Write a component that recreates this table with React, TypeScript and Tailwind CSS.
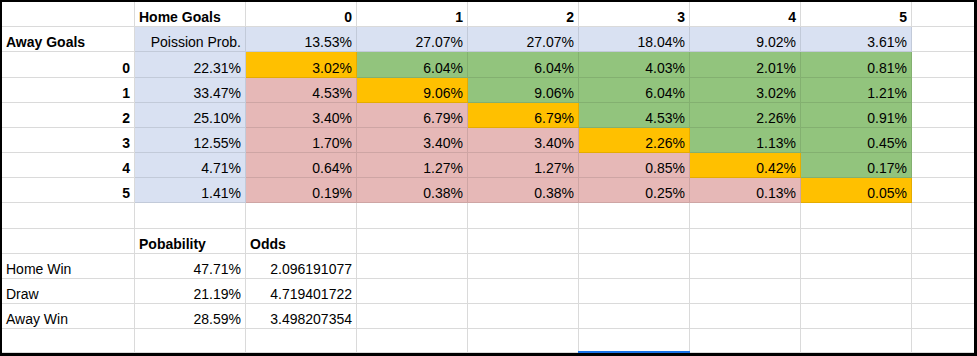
import React from "react";

type Cell = {
  t?: string;
  a?: "l" | "r";
  b?: boolean;
  bg?: "blue" | "green" | "pink" | "orange";
};

const bgClass: Record<string, string> = {
  blue: "bg-[#d9e1f2] border-black/10",
  green: "bg-[#92c47d] border-black/10",
  pink: "bg-[#e6b8b7] border-black/10",
  orange: "bg-[#ffc000] border-black/10",
};

const homeProb = ["13.53%", "27.07%", "27.07%", "18.04%", "9.02%", "3.61%"];
const awayProb = ["22.31%", "33.47%", "25.10%", "12.55%", "4.71%", "1.41%"];
const matrix = [
  ["3.02%", "6.04%", "6.04%", "4.03%", "2.01%", "0.81%"],
  ["4.53%", "9.06%", "9.06%", "6.04%", "3.02%", "1.21%"],
  ["3.40%", "6.79%", "6.79%", "4.53%", "2.26%", "0.91%"],
  ["1.70%", "3.40%", "3.40%", "2.26%", "1.13%", "0.45%"],
  ["0.64%", "1.27%", "1.27%", "0.85%", "0.42%", "0.17%"],
  ["0.19%", "0.38%", "0.38%", "0.25%", "0.13%", "0.05%"],
];

const rows: Cell[][] = [];
rows.push([
  {},
  { t: "Home Goals", a: "l", b: true },
  ...["0", "1", "2", "3", "4", "5"].map((t) => ({ t, a: "r" as const, b: true })),
  {},
]);
rows.push([
  { t: "Away Goals", a: "l", b: true },
  { t: "Poission Prob.", a: "r", bg: "blue" },
  ...homeProb.map((t) => ({ t, a: "r" as const, bg: "blue" as const })),
  {},
]);
matrix.forEach((r, i) => {
  rows.push([
    { t: String(i), a: "r", b: true },
    { t: awayProb[i], a: "r", bg: "blue" },
    ...r.map((t, j) => ({
      t,
      a: "r" as const,
      bg: (j === i ? "orange" : j > i ? "green" : "pink") as Cell["bg"],
    })),
    {},
  ]);
});
const blank = (): Cell[] => Array.from({ length: 9 }, () => ({}));
rows.push(blank());
rows.push([{}, { t: "Pobability", a: "l", b: true }, { t: "Odds", a: "l", b: true }, ...Array.from({ length: 6 }, () => ({}))]);
const outcomes = [
  ["Home Win", "47.71%", "2.096191077"],
  ["Draw", "21.19%", "4.719401722"],
  ["Away Win", "28.59%", "3.498207354"],
];
outcomes.forEach(([n, p, o]) => {
  rows.push([{ t: n, a: "l" }, { t: p, a: "r" }, { t: o, a: "r" }, ...Array.from({ length: 6 }, () => ({}))]);
});
rows.push(blank());

export default function App() {
  return (
    <div className="relative w-[977px] h-[356px] overflow-hidden bg-white border-l-2 border-t-2 border-r-[3px] border-b-[3px] border-black font-['Liberation_Sans',Arial,sans-serif] text-[14px] leading-[15px] text-black">
      <div className="grid grid-cols-[133px_repeat(7,111px)_1fr] grid-rows-[25px_25px_26px_25px_25px_25px_25px_25px_26px_25px_25px_25px_25px_24px]">
        {rows.map((row, ri) =>
          row.map((c, ci) => (
            <div
              key={ri + "-" + ci}
              className={
                "flex items-end pb-[1px] px-1 whitespace-nowrap overflow-hidden border-b " +
                (ci < 8 ? "border-r " : "") +
                (c.bg ? bgClass[c.bg] : "border-[#dadada]") +
                (c.a === "r" ? " justify-end" : " justify-start") +
                (c.b ? " font-bold" : "")
              }
            >
              {c.t}
            </div>
          ))
        )}
      </div>
      <div className="absolute left-[576px] top-[349px] w-[111px] h-[2px] bg-[#1a73e8]" />
      <div className="absolute left-[684px] top-[349px] w-[4px] h-[4px] bg-[#1a73e8]" />
    </div>
  );
}
